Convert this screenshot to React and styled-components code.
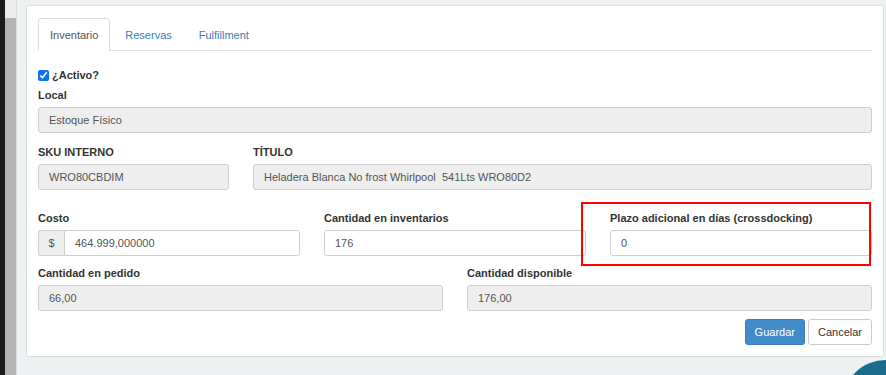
import React from 'react'
import styled, { createGlobalStyle } from 'styled-components'

const GlobalStyle = createGlobalStyle`
  html, body {
    margin: 0;
    padding: 0;
    background: #eef1f2;
    font-family: "Liberation Sans", Arial, sans-serif;
    font-size: 11px;
    color: #333;
  }
  * {
    box-sizing: border-box;
  }
`

const Page = styled.div`
  display: flex;
  width: 886px;
  height: 375px;
  overflow: hidden;
  position: relative;
`

const Sidebar = styled.div`
  display: flex;
  flex: 0 0 17px;
`

const DarkStrip = styled.div`
  width: 5px;
  background: #1c1c1c;
`

const GrayStrip = styled.div`
  width: 11px;
  background: #b4b4b4;
  border-top: 18px solid #ececec;
`

const Edge = styled.div`
  width: 1px;
  background: #d9dcdd;
`

const Main = styled.div`
  flex: 1;
  padding: 5px 2px 0 9px;
`

const Card = styled.div`
  background: #fff;
  border: 1px solid #dcdfe0;
  border-radius: 3px;
  padding: 12px 11px 11px 11px;
`

const TabBar = styled.div`
  display: flex;
  border-bottom: 1px solid #e2e2e2;
  height: 33px;
`

const Tab = styled.div`
  height: 33px;
  padding: 9px 11px 0;
  margin-right: 3px;
  margin-bottom: -1px;
  border: 1px solid ${p => (p.$active ? '#dddddd' : 'transparent')};
  border-bottom-color: ${p => (p.$active ? '#fff' : 'transparent')};
  border-radius: 4px 4px 0 0;
  background: ${p => (p.$active ? '#fff' : 'transparent')};
  color: ${p => (p.$active ? '#555' : '#3a7dc0')};
  line-height: 14px;
`

const CheckRow = styled.label`
  display: flex;
  align-items: center;
  gap: 3px;
  margin-top: 17px;
  height: 14px;
  font-weight: bold;
`

const Check = styled.input`
  width: 11px;
  height: 11px;
  margin: 0;
  accent-color: #0a74f0;
`

const Row = styled.div`
  display: grid;
  grid-template-columns: ${p => p.$cols};
  column-gap: 24px;
  margin-top: ${p => p.$mt}px;
`

const Group = styled.div`
  display: flex;
  flex-direction: column;
`

const Label = styled.div`
  font-weight: bold;
  line-height: 14px;
  margin-bottom: 5px;
  color: #333;
  white-space: nowrap;
`

const Field = styled.div`
  flex: 1 0 auto;
  height: 26px;
  display: flex;
  align-items: center;
  padding: 0 10px;
  border: 1px solid #cfcfcf;
  border-radius: ${p => (p.$joined ? '0 3px 3px 0' : '3px')};
  background: ${p => (p.$disabled ? '#eeeeee' : '#fff')};
  color: #555;
  white-space: pre;
  min-width: 0;
`

const InputGroup = styled.div`
  display: flex;
  height: 26px;
`

const Addon = styled.div`
  width: 26px;
  display: flex;
  align-items: center;
  justify-content: center;
  background: #eeeeee;
  border: 1px solid #cfcfcf;
  border-right: none;
  border-radius: 3px 0 0 3px;
  color: #555;
`

const Actions = styled.div`
  display: flex;
  justify-content: flex-end;
  gap: 3px;
  margin-top: 8px;
`

const Button = styled.button`
  height: 26px;
  margin: 0;
  padding: 0 9px;
  font-family: inherit;
  font-size: 11px;
  border-radius: 3px;
  border: 1px solid ${p => (p.$primary ? '#3a80c2' : '#cccccc')};
  background: ${p => (p.$primary ? '#428bca' : '#fff')};
  color: ${p => (p.$primary ? '#fff' : '#333')};
`

const Highlight = styled.div`
  position: absolute;
  left: 581px;
  top: 202px;
  width: 290px;
  height: 64px;
  border: 2px solid #ff0000;
  pointer-events: none;
`

const ChatBubble = styled.div`
  position: absolute;
  left: 842px;
  top: 360px;
  width: 88px;
  height: 88px;
  border-radius: 50%;
  background: #1b6d8d;
`

export default function App() {
  return (
    <Page>
      <GlobalStyle />
      <Sidebar>
        <DarkStrip />
        <GrayStrip />
        <Edge />
      </Sidebar>
      <Main>
        <Card>
          <TabBar>
            <Tab $active>Inventario</Tab>
            <Tab>Reservas</Tab>
            <Tab>Fulfillment</Tab>
          </TabBar>

          <CheckRow>
            <Check type="checkbox" defaultChecked />
            ¿Activo?
          </CheckRow>

          <Row $cols="1fr" $mt={6}>
            <Group>
              <Label>Local</Label>
              <Field $disabled>Estoque Físico</Field>
            </Group>
          </Row>

          <Row $cols="191px 1fr" $mt={12}>
            <Group>
              <Label>SKU INTERNO</Label>
              <Field $disabled>WRO80CBDIM</Field>
            </Group>
            <Group>
              <Label>TÍTULO</Label>
              <Field $disabled>Heladera Blanca No frost Whirlpool  541Lts WRO80D2</Field>
            </Group>
          </Row>

          <Row $cols="1fr 1fr 1fr" $mt={21}>
            <Group>
              <Label>Costo</Label>
              <InputGroup>
                <Addon>$</Addon>
                <Field $joined>464.999,000000</Field>
              </InputGroup>
            </Group>
            <Group>
              <Label>Cantidad en inventarios</Label>
              <Field>176</Field>
            </Group>
            <Group>
              <Label>Plazo adicional en días (crossdocking)</Label>
              <Field>0</Field>
            </Group>
          </Row>

          <Row $cols="1fr 1fr" $mt={10}>
            <Group>
              <Label>Cantidad en pedido</Label>
              <Field $disabled>66,00</Field>
            </Group>
            <Group>
              <Label>Cantidad disponible</Label>
              <Field $disabled>176,00</Field>
            </Group>
          </Row>

          <Actions>
            <Button $primary>Guardar</Button>
            <Button>Cancelar</Button>
          </Actions>
        </Card>
      </Main>
      <Highlight />
      <ChatBubble />
    </Page>
  )
}
